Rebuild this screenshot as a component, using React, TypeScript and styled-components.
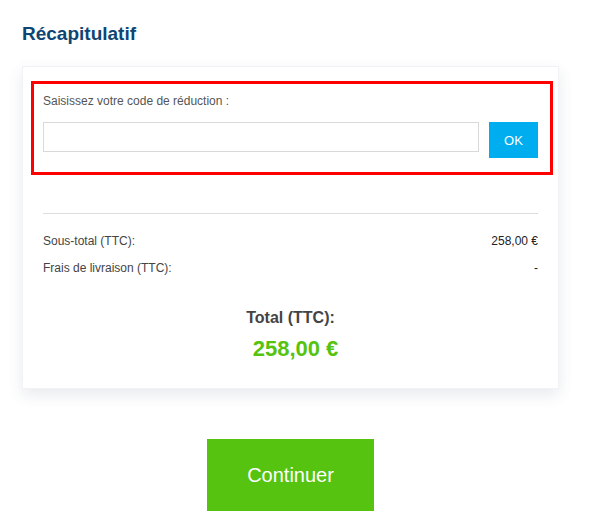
import React from 'react';
import styled, { createGlobalStyle } from 'styled-components';

const GlobalStyle = createGlobalStyle`
  body {
    margin: 0;
    background: #fff;
    font-family: "Liberation Sans", Arial, sans-serif;
  }
`;

const Page = styled.div`
  width: 537px;
  padding: 23px 0 20px 22px;
`;

const Title = styled.h2`
  margin: 0 0 21px;
  font-size: 19px;
  line-height: 22px;
  font-weight: 700;
  color: #0d4575;
`;

const Card = styled.section`
  background: #fff;
  padding: 14px 20px 26px;
  border: 1px solid #f0f2f5;
  box-sizing: border-box;
  box-shadow: 0 6px 14px rgba(60, 80, 110, 0.12);
`;

const PromoBox = styled.div`
  margin: 0 -15px 0 -12px;
  padding: 10px 12px 14px 9px;
  border: 3px solid #ff0000;
`;

const PromoLabel = styled.label`
  display: block;
  font-size: 12px;
  line-height: 14px;
  color: #555;
`;

const PromoRow = styled.div`
  display: flex;
  align-items: flex-start;
  gap: 10px;
  margin-top: 14px;
`;

const PromoInput = styled.input`
  flex: 1;
  height: 30px;
  box-sizing: border-box;
  border: 1px solid #d9d9d9;
  padding: 0 8px;
  font: inherit;
  outline: none;
`;

const OkButton = styled.button`
  width: 49px;
  height: 36px;
  border: 0;
  background: #00aeef;
  color: #fff;
  font-family: inherit;
  font-size: 13px;
  cursor: pointer;
`;

const Divider = styled.hr`
  margin: 38px 0 14px;
  border: 0;
  border-top: 1px solid #ddd;
`;

const Line = styled.div`
  display: flex;
  justify-content: space-between;
  font-size: 12px;
  line-height: 27px;
  color: #444;
`;

const LineValue = styled.span`
  color: #222;
`;

const TotalBlock = styled.div`
  margin-top: 26px;
  text-align: center;
`;

const TotalLabel = styled.div`
  font-size: 16px;
  line-height: 20px;
  font-weight: 700;
  color: #444;
`;

const TotalAmount = styled.div`
  margin-top: 8px;
  padding-left: 10px;
  font-size: 22px;
  line-height: 26px;
  font-weight: 700;
  color: #56c30f;
`;

const Actions = styled.div`
  display: flex;
  justify-content: center;
  margin-top: 50px;
`;

const ContinueButton = styled.button`
  width: 167px;
  height: 72px;
  border: 0;
  background: #55c30f;
  color: #fff;
  font-family: inherit;
  font-size: 20px;
  cursor: pointer;
`;

export default function App() {
  return (
    <>
      <GlobalStyle />
      <Page>
        <Title>Récapitulatif</Title>
        <Card>
          <PromoBox>
            <PromoLabel htmlFor="promo">Saisissez votre code de réduction :</PromoLabel>
            <PromoRow>
              <PromoInput id="promo" type="text" />
              <OkButton>OK</OkButton>
            </PromoRow>
          </PromoBox>
          <Divider />
          <Line>
            <span>Sous-total (TTC):</span>
            <LineValue>258,00 €</LineValue>
          </Line>
          <Line>
            <span>Frais de livraison (TTC):</span>
            <LineValue>-</LineValue>
          </Line>
          <TotalBlock>
            <TotalLabel>Total (TTC):</TotalLabel>
            <TotalAmount>258,00 €</TotalAmount>
          </TotalBlock>
        </Card>
        <Actions>
          <ContinueButton>Continuer</ContinueButton>
        </Actions>
      </Page>
    </>
  );
}
